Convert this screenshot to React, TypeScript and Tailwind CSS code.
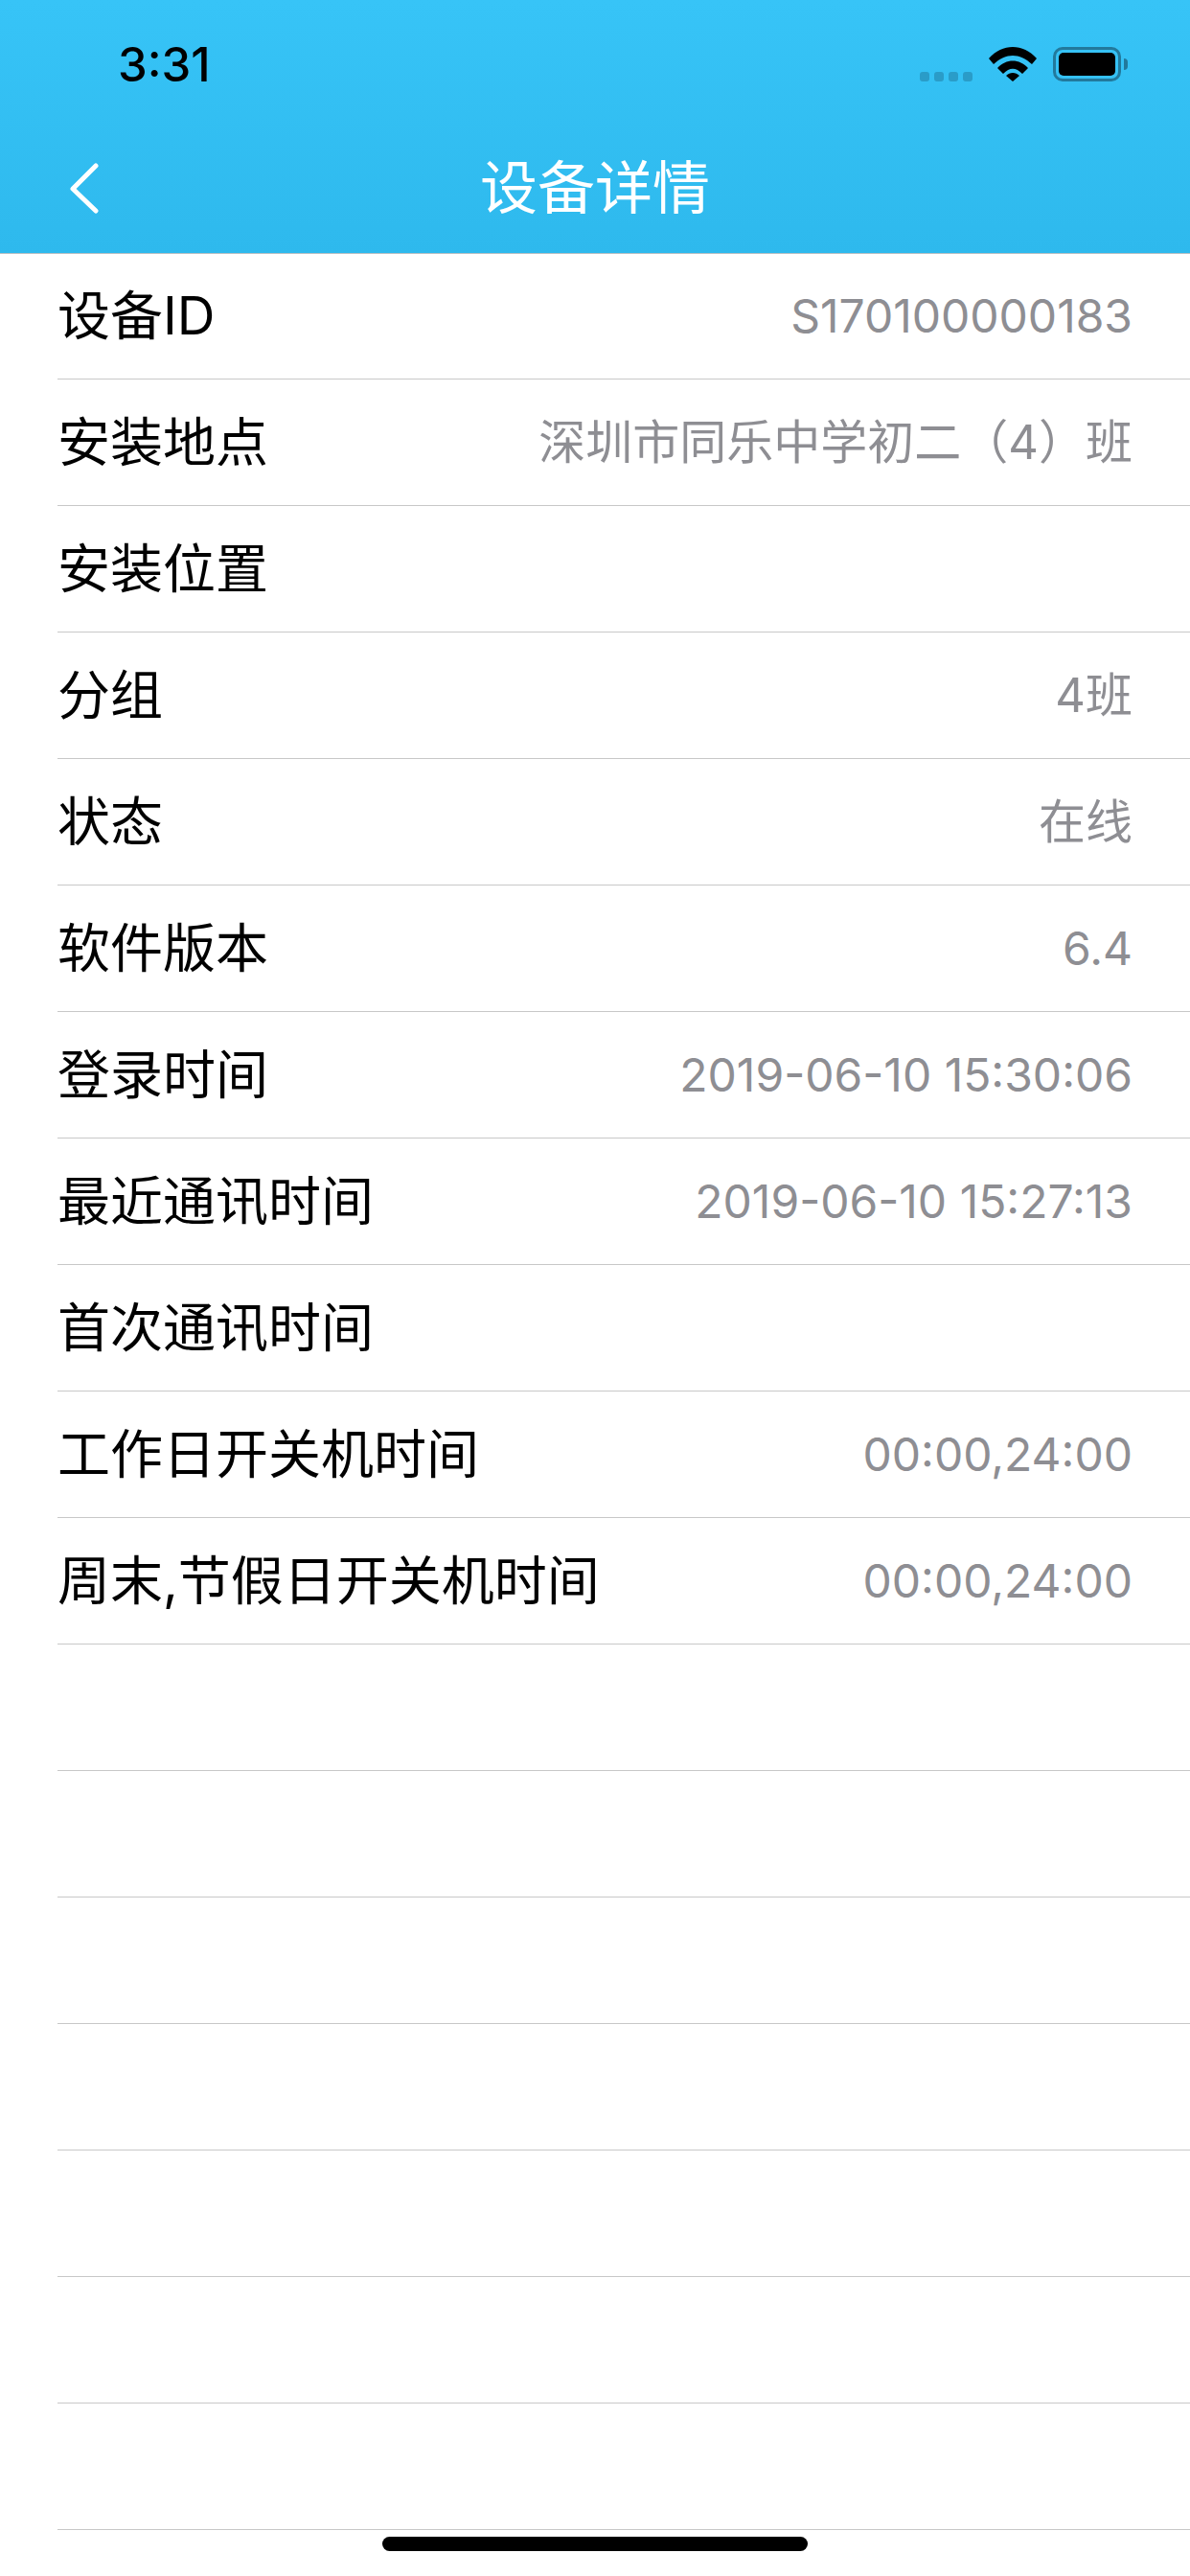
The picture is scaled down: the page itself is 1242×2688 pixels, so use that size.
import React from "react";

const rows: [string, string][] = [
  ["设备ID", "S170100000183"],
  ["安装地点", "深圳市同乐中学初二（4）班"],
  ["安装位置", ""],
  ["分组", "4班"],
  ["状态", "在线"],
  ["软件版本", "6.4"],
  ["登录时间", "2019-06-10 15:30:06"],
  ["最近通讯时间", "2019-06-10 15:27:13"],
  ["首次通讯时间", ""],
  ["工作日开关机时间", "00:00,24:00"],
  ["周末,节假日开关机时间", "00:00,24:00"],
  ["", ""],
  ["", ""],
  ["", ""],
  ["", ""],
  ["", ""],
  ["", ""],
  ["", ""],
];

const font = "font-['Inter','Noto_Sans_CJK_SC',sans-serif]";

const App = () => {
  return (
    <div className={`relative h-[2688px] w-[1242px] overflow-hidden bg-white ${font}`}>
      <header className="h-[265px] border-b border-[#b8c0c4] bg-gradient-to-b from-[#37c4f7] to-[#2eb9ed]">
        <div className="flex h-[132px] items-start justify-between pl-[123px] pr-[65px] pt-[40px]">
          <span className="text-[49px] font-medium leading-[56px] text-black">3:31</span>
          <div className="flex items-start pt-[9px]">
            <div className="mr-[17px] mt-[26px] flex gap-[5px]">
              <span className="size-[10px] rounded-[3px] bg-[#2a9cc8]" />
              <span className="size-[10px] rounded-[3px] bg-[#2a9cc8]" />
              <span className="size-[10px] rounded-[3px] bg-[#2a9cc8]" />
              <span className="size-[10px] rounded-[3px] bg-[#2a9cc8]" />
            </div>
            <svg width="50" height="36" viewBox="0 0 50 36" className="mr-[17px]">
              <path d="M0 12 C14 -4 36 -4 50 12 L45 18 C32 6 18 6 5 18 Z" fill="#000" />
              <path d="M9 22 C18 12 32 12 41 22 L35 28 C28 21 22 21 15 28 Z" fill="#000" />
              <path d="M18 30 C22 26 28 26 32 30 L25 36 Z" fill="#000" />
            </svg>
            <div className="flex items-center">
              <div className="h-[36px] w-[71px] rounded-[10px] border-[3px] border-[#22799c] p-[3px]">
                <div className="h-full w-full rounded-[5px] bg-black" />
              </div>
              <span className="ml-[3px] h-[12px] w-[4px] rounded-r-full bg-[#22799c]" />
            </div>
          </div>
        </div>
        <nav className="relative flex h-[132px] items-center justify-center pb-[5px]">
          <svg
            width="30"
            height="54"
            viewBox="0 0 30 54"
            fill="none"
            stroke="#fff"
            strokeWidth="5"
            strokeLinecap="round"
            strokeLinejoin="round"
            className="absolute left-[73px] top-[38px]"
          >
            <path d="M27 3 L3 27 L27 50" />
          </svg>
          <h1 className="text-[60px] font-normal leading-none text-white">设备详情</h1>
        </nav>
      </header>
      <ul className="-mt-px">
        {rows.map(([label, value], i) => (
          <li key={i} className="ml-[60px] flex h-[132px] items-center justify-between border-b border-[#c8c8c8] pr-[60px]">
            <span className="text-[55px] leading-none text-black">{label}</span>
            <span className={/[\u4e00-\u9fff]/.test(value) ? "text-[49px] leading-none text-[#8e8e93]" : "text-[48px] leading-none text-[#8e8e93]"}>
              {value}
            </span>
          </li>
        ))}
      </ul>
      <div className="absolute bottom-[26px] left-[399px] h-[15px] w-[444px] rounded-full bg-black" />
    </div>
  );
};

export default App;
